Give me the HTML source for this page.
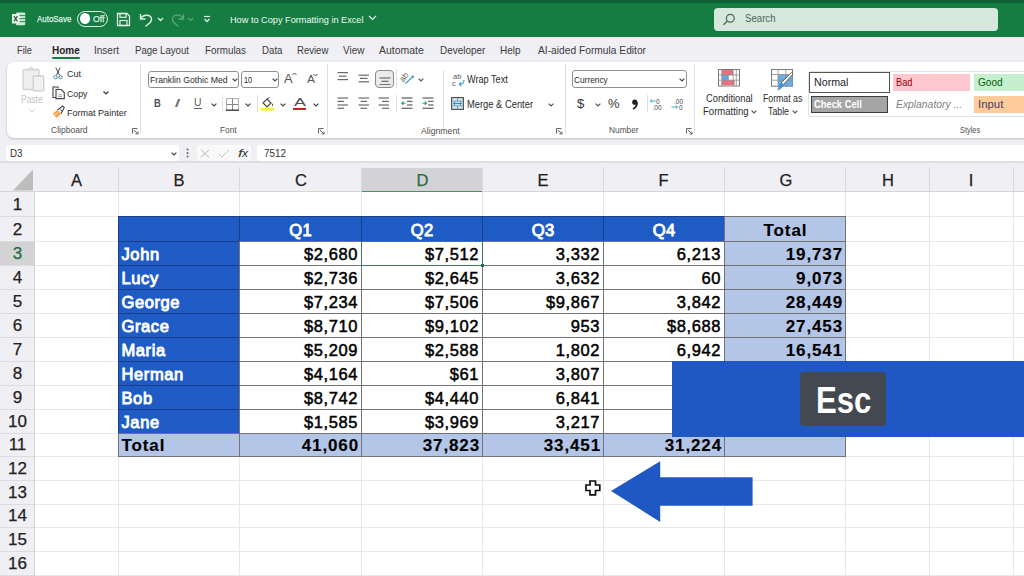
<!DOCTYPE html>
<html><head><meta charset="utf-8">
<style>
*{margin:0;padding:0;box-sizing:border-box}
html,body{width:1024px;height:576px;overflow:hidden;background:#f3f3f3;font-family:"Liberation Sans",sans-serif;position:relative}
.a{position:absolute;white-space:nowrap}
.gl{background:#e1e1e1}
.ch{top:167px;height:24px;font-size:17px;text-align:center;line-height:26px;border-right:1px solid #d8d8d8}
.rh{left:0;width:34px;font-size:17px;text-align:center;border-bottom:1px solid #d8d8d8}
.c{font-size:17px;font-weight:bold;padding:0 3px}
.t{color:#fff;font-size:10px}
.m{font-size:11px;color:#3a3a3a}
.rb{font-size:10px;color:#333}
.lbl{font-size:9px;color:#555}
.sep{width:1px;background:#dcdcdc}

</style></head><body>
<div class="a" style="left:0px;top:0px;width:1024px;height:37px;background:#157d41"></div>
<div class="a" style="left:0px;top:0px;width:1024px;height:2.5px;background:#0e5f31"></div>
<svg class="a" style="left:12px;top:12px;" width="14" height="14" viewBox="0 0 14 14"><rect x="4" y="0.5" width="9.2" height="12.8" rx="1" fill="#cdebd6"/><line x1="7" y1="3.6" x2="13.2" y2="3.6" stroke="#157d41" stroke-width="0.9"/><line x1="7" y1="6.6" x2="13.2" y2="6.6" stroke="#157d41" stroke-width="0.9"/><line x1="7" y1="9.7" x2="13.2" y2="9.7" stroke="#157d41" stroke-width="0.9"/><rect x="0" y="2" width="7.5" height="9.6" rx="0.6" fill="#e6f4ea"/><path d="M2 4.2 L5.4 9.4 M5.4 4.2 L2 9.4" stroke="#3b4f42" stroke-width="1.2"/></svg>
<div class="a" style="left:37.3px;top:14.85px;font-size:9px;line-height:9px;color:#dff0e4;transform:scaleX(0.881);transform-origin:0 0;-webkit-text-stroke:0.25px #dff0e4;">AutoSave</div>
<div class="a" style="left:77px;top:11px;width:31px;height:16px;border:1.5px solid #dff0e4;border-radius:8px"></div>
<div class="a" style="left:79.5px;top:13px;width:10.5px;height:11px;background:#fff;border-radius:50%"></div>
<div class="a" style="left:93.0px;top:14.85px;font-size:9px;line-height:9px;color:#dff0e4;transform:scaleX(0.971);transform-origin:0 0;-webkit-text-stroke:0.25px #dff0e4;">Off</div>
<svg class="a" style="left:116px;top:12px;" width="15" height="15" viewBox="0 0 15 15"><path d="M1.5 1.5 H11 L13.5 4 V13.5 H1.5 Z" fill="none" stroke="#dff0e4" stroke-width="1.3"/><rect x="4" y="1.5" width="6" height="3.8" fill="none" stroke="#dff0e4" stroke-width="1.2"/><rect x="4" y="8.5" width="7" height="5" fill="none" stroke="#dff0e4" stroke-width="1.2"/></svg>
<svg class="a" style="left:139px;top:12px;" width="15" height="15" viewBox="0 0 15 15"><path d="M2 6.5 C4 2 12 2 12.5 7 C13 10.5 9 12 6.5 14.5" fill="none" stroke="#dff0e4" stroke-width="1.4"/><path d="M1.5 2 V7 H6.5" fill="none" stroke="#dff0e4" stroke-width="1.4"/></svg>
<svg class="a" style="left:157px;top:17px;" width="7" height="5" viewBox="0 0 7 5"><path d="M1 1 L3.5 3.5 L6 1" fill="none" stroke="#dff0e4" stroke-width="1.3"/></svg>
<svg class="a" style="left:170px;top:12px;" width="15" height="15" viewBox="0 0 15 15"><path d="M13 6.5 C11 2 3 2 2.5 7 C2 10.5 6 12 8.5 14.5" fill="none" stroke="#5aa776" stroke-width="1.3"/><path d="M13.5 2 V7 H8.5" fill="none" stroke="#5aa776" stroke-width="1.3"/></svg>
<svg class="a" style="left:187px;top:17px;" width="7" height="5" viewBox="0 0 7 5"><path d="M1 1 L3.5 3.5 L6 1" fill="none" stroke="#5aa776" stroke-width="1.1"/></svg>
<svg class="a" style="left:203px;top:15px;" width="8" height="8" viewBox="0 0 8 8"><line x1="1" y1="1.5" x2="7" y2="1.5" stroke="#dff0e4" stroke-width="1.2"/><path d="M1.5 4 L4 6.5 L6.5 4" fill="none" stroke="#dff0e4" stroke-width="1.3"/></svg>
<div class="a" style="left:229.7px;top:14.73px;font-size:9.5px;line-height:9.5px;color:#f2f8f4;transform:scaleX(0.965);transform-origin:0 0;">How to Copy Formatting in Excel</div>
<svg class="a" style="left:368px;top:15px;" width="9" height="6" viewBox="0 0 9 6"><path d="M1 1 L4.5 4.5 L8 1" fill="none" stroke="#f2f8f4" stroke-width="1.2"/></svg>
<div class="a" style="left:713.5px;top:7.5px;width:284px;height:23px;background:#d6e8dc;border-radius:4px"></div>
<svg class="a" style="left:722px;top:13px;" width="14" height="13" viewBox="0 0 14 13"><circle cx="8.3" cy="5.2" r="3.9" fill="none" stroke="#476653" stroke-width="1.2"/><line x1="5.4" y1="8" x2="1.5" y2="11.8" stroke="#476653" stroke-width="1.3"/></svg>
<div class="a" style="left:745.0px;top:13.70px;font-size:10px;line-height:10px;color:#4a6653;transform:scaleX(0.963);transform-origin:0 0;">Search</div>
<div class="a" style="left:0px;top:37px;width:1024px;height:126px;background:#efeff4"></div>
<div class="a" style="left:16.6px;top:44.95px;font-size:11px;line-height:11px;color:#3b3b3b;transform:scaleX(0.846);transform-origin:0 0;">File</div>
<div class="a" style="left:52.0px;top:44.95px;font-size:11px;line-height:11px;color:#1f1f1f;font-weight:bold;transform:scaleX(0.906);transform-origin:0 0;">Home</div>
<div class="a" style="left:94.0px;top:44.95px;font-size:11px;line-height:11px;color:#3b3b3b;transform:scaleX(0.909);transform-origin:0 0;">Insert</div>
<div class="a" style="left:135.0px;top:44.95px;font-size:11px;line-height:11px;color:#3b3b3b;transform:scaleX(0.874);transform-origin:0 0;">Page Layout</div>
<div class="a" style="left:205.0px;top:44.95px;font-size:11px;line-height:11px;color:#3b3b3b;transform:scaleX(0.894);transform-origin:0 0;">Formulas</div>
<div class="a" style="left:261.5px;top:44.95px;font-size:11px;line-height:11px;color:#3b3b3b;transform:scaleX(0.882);transform-origin:0 0;">Data</div>
<div class="a" style="left:296.7px;top:44.95px;font-size:11px;line-height:11px;color:#3b3b3b;transform:scaleX(0.868);transform-origin:0 0;">Review</div>
<div class="a" style="left:342.6px;top:44.95px;font-size:11px;line-height:11px;color:#3b3b3b;transform:scaleX(0.905);transform-origin:0 0;">View</div>
<div class="a" style="left:379.0px;top:44.95px;font-size:11px;line-height:11px;color:#3b3b3b;transform:scaleX(0.949);transform-origin:0 0;">Automate</div>
<div class="a" style="left:439.6px;top:44.95px;font-size:11px;line-height:11px;color:#3b3b3b;transform:scaleX(0.905);transform-origin:0 0;">Developer</div>
<div class="a" style="left:500.4px;top:44.95px;font-size:11px;line-height:11px;color:#3b3b3b;transform:scaleX(0.910);transform-origin:0 0;">Help</div>
<div class="a" style="left:537.6px;top:44.95px;font-size:11px;line-height:11px;color:#3b3b3b;transform:scaleX(0.930);transform-origin:0 0;">AI-aided Formula Editor</div>
<div class="a" style="left:52px;top:57px;width:28px;height:2px;background:#157d41;border-radius:1px"></div>
<div class="a" style="left:6.5px;top:62px;width:1040px;height:76px;background:#fff;border-radius:7px;box-shadow:0 1px 2.5px rgba(0,0,0,.20)"></div>
<div class="a" style="left:139.5px;top:64px;width:1px;height:70px;background:#e1e1e1"></div>
<div class="a" style="left:327px;top:64px;width:1px;height:70px;background:#e1e1e1"></div>
<div class="a" style="left:565px;top:64px;width:1px;height:70px;background:#e1e1e1"></div>
<div class="a" style="left:693.5px;top:64px;width:1px;height:70px;background:#e1e1e1"></div>
<svg class="a" style="left:20px;top:66px;" width="26" height="27" viewBox="0 0 26 27"><rect x="3" y="3.5" width="16" height="20" rx="1.2" fill="#efefef" stroke="#d2d2d2" stroke-width="1.3"/><path d="M8.5 4 L11 1 L13.5 4 Z" fill="#e6e6e6" stroke="#d2d2d2" stroke-width="1.1"/><rect x="13.2" y="10" width="10.5" height="14.8" rx="0.8" fill="#f1f1f1" stroke="#cdcdcd" stroke-width="1.3"/></svg>
<div class="a" style="left:20.5px;top:95.10px;font-size:10px;line-height:10px;color:#c4c4c4;transform:scaleX(0.848);transform-origin:0 0;">Paste</div>
<svg class="a" style="left:28.5px;top:108.5px;" width="6" height="4" viewBox="0 0 6 4"><path d="M0.5 0.5 L3 3 L5.5 0.5" fill="none" stroke="#c8c8c8" stroke-width="1"/></svg>
<svg class="a" style="left:53px;top:67px;" width="10" height="13" viewBox="0 0 10 13"><path d="M2.8 0.5 L6.6 8.3 M7.2 0.5 L3.4 8.3" stroke="#4a4a4a" stroke-width="1"/><circle cx="2.6" cy="10.2" r="1.7" fill="none" stroke="#4c8da0" stroke-width="1"/><circle cx="7.4" cy="10.2" r="1.7" fill="none" stroke="#4c8da0" stroke-width="1"/></svg>
<div class="a" style="left:67.3px;top:69.12px;font-size:9.5px;line-height:9.5px;color:#2b2b2b;transform:scaleX(0.946);transform-origin:0 0;">Cut</div>
<svg class="a" style="left:51.5px;top:86px;" width="14" height="14" viewBox="0 0 14 14"><path d="M6 2.5 V1 H1 V11.5 H4" fill="none" stroke="#444" stroke-width="1.1"/><path d="M4 3.5 H9.2 L12.3 6.6 V12.6 H4 Z" fill="#fff" stroke="#444" stroke-width="1.1"/><line x1="6.3" y1="8.8" x2="10" y2="8.8" stroke="#888" stroke-width="0.8"/><line x1="6.3" y1="10.6" x2="10" y2="10.6" stroke="#888" stroke-width="0.8"/></svg>
<div class="a" style="left:67.3px;top:89.12px;font-size:9.5px;line-height:9.5px;color:#2b2b2b;transform:scaleX(0.924);transform-origin:0 0;">Copy</div>
<svg class="a" style="left:102.5px;top:91px;" width="6" height="4" viewBox="0 0 6 4"><path d="M0.5 0.5 L3 3 L5.5 0.5" fill="none" stroke="#333" stroke-width="1.1"/></svg>
<svg class="a" style="left:52px;top:105px;" width="13" height="14" viewBox="0 0 13 14"><path d="M0.8 8.5 L5.5 5 L9 8.8 L4.5 13 Z" fill="#f3a04a"/><path d="M1.5 11 L6 7.5" stroke="#fff" stroke-width="0.7"/><path d="M5.5 5 L10.8 1 L12.3 2.6 L9 8.8" fill="none" stroke="#4a4a4a" stroke-width="1.1"/><path d="M8 4.5 L10.5 6" stroke="#4a4a4a" stroke-width="0.9"/></svg>
<div class="a" style="left:67.3px;top:108.42px;font-size:9.5px;line-height:9.5px;color:#2b2b2b;transform:scaleX(0.950);transform-origin:0 0;">Format Painter</div>
<div class="a" style="left:50.5px;top:126.15px;font-size:9px;line-height:9px;color:#505050;transform:scaleX(0.947);transform-origin:0 0;">Clipboard</div>
<svg class="a" style="left:131.5px;top:127.5px;" width="7" height="7" viewBox="0 0 7 7"><path d="M0.5 0.5 H5.5 M0.5 0.5 V5.5" stroke="#666" stroke-width="1"/><path d="M2 2 L6 6 M6 3.5 V6 H3.5" fill="none" stroke="#666" stroke-width="1"/></svg>
<svg class="a" style="left:318px;top:127.5px;" width="7" height="7" viewBox="0 0 7 7"><path d="M0.5 0.5 H5.5 M0.5 0.5 V5.5" stroke="#666" stroke-width="1"/><path d="M2 2 L6 6 M6 3.5 V6 H3.5" fill="none" stroke="#666" stroke-width="1"/></svg>
<svg class="a" style="left:556px;top:127.5px;" width="7" height="7" viewBox="0 0 7 7"><path d="M0.5 0.5 H5.5 M0.5 0.5 V5.5" stroke="#666" stroke-width="1"/><path d="M2 2 L6 6 M6 3.5 V6 H3.5" fill="none" stroke="#666" stroke-width="1"/></svg>
<svg class="a" style="left:685.5px;top:127.5px;" width="7" height="7" viewBox="0 0 7 7"><path d="M0.5 0.5 H5.5 M0.5 0.5 V5.5" stroke="#666" stroke-width="1"/><path d="M2 2 L6 6 M6 3.5 V6 H3.5" fill="none" stroke="#666" stroke-width="1"/></svg>
<div class="a" style="left:147.7px;top:70.7px;width:91px;height:17.6px;border:1px solid #8f8f8f;border-radius:3px;background:#fff"></div>
<div class="a" style="left:150.2px;top:75.22px;font-size:9.5px;line-height:9.5px;color:#2b2b2b;transform:scaleX(0.913);transform-origin:0 0;">Franklin Gothic Med</div>
<svg class="a" style="left:231.5px;top:78px;" width="6" height="4" viewBox="0 0 6 4"><path d="M0.6 0.6 L3 3 L5.4 0.6" fill="none" stroke="#444" stroke-width="1.2"/></svg>
<div class="a" style="left:241.4px;top:70.7px;width:37.6px;height:17.6px;border:1px solid #8f8f8f;border-radius:3px;background:#fff"></div>
<div class="a" style="left:243.8px;top:75.22px;font-size:9.5px;line-height:9.5px;color:#2b2b2b;transform:scaleX(0.775);transform-origin:0 0;">10</div>
<svg class="a" style="left:271.5px;top:78px;" width="6" height="4" viewBox="0 0 6 4"><path d="M0.6 0.6 L3 3 L5.4 0.6" fill="none" stroke="#444" stroke-width="1.2"/></svg>
<div class="a" style="left:284.4px;top:72.35px;font-size:13px;line-height:13px;color:#555;transform:scaleX(0.992);transform-origin:0 0;">A</div>
<svg class="a" style="left:292px;top:72px;" width="5" height="4" viewBox="0 0 5 4"><path d="M0.5 3 L2.5 1 L4.5 3" fill="none" stroke="#333" stroke-width="0.9"/></svg>
<div class="a" style="left:307.0px;top:73.62px;font-size:11.5px;line-height:11.5px;color:#555;transform:scaleX(1.043);transform-origin:0 0;">A</div>
<svg class="a" style="left:313px;top:73px;" width="5" height="4" viewBox="0 0 5 4"><path d="M0.5 1 L2.5 3 L4.5 1" fill="none" stroke="#333" stroke-width="0.9"/></svg>
<div class="a" style="left:153.5px;top:98.38px;font-size:10.5px;line-height:10.5px;color:#505050;font-weight:bold;transform:scaleX(0.895);transform-origin:0 0;">B</div>
<div class="a" style="left:174.0px;top:97.72px;font-size:11.5px;line-height:11.5px;color:#707070;font-style:italic;transform:scaleX(2.029);transform-origin:0 0;font-family:"Liberation Serif";">I</div>
<div class="a" style="left:194.0px;top:97.08px;font-size:10.5px;line-height:10.5px;color:#606060;transform:scaleX(0.988);transform-origin:0 0;">U</div>
<div class="a" style="left:193.6px;top:107.8px;width:8px;height:1px;background:#606060"></div>
<svg class="a" style="left:211px;top:102.5px;" width="6" height="4" viewBox="0 0 6 4"><path d="M0.6 0.6 L3 3 L5.4 0.6" fill="none" stroke="#444" stroke-width="1.2"/></svg>
<div class="a" style="left:222px;top:95px;width:1px;height:17px;background:#e1e1e1"></div>
<svg class="a" style="left:226px;top:98px;" width="13" height="13" viewBox="0 0 13 13"><rect x="0.6" y="0.6" width="11.8" height="11.8" fill="none" stroke="#aaa" stroke-width="1"/><line x1="6.5" y1="0.6" x2="6.5" y2="12" stroke="#888" stroke-width="1"/><line x1="0.6" y1="6.5" x2="12.4" y2="6.5" stroke="#888" stroke-width="1"/><line x1="0" y1="12.2" x2="13" y2="12.2" stroke="#444" stroke-width="1.4"/></svg>
<svg class="a" style="left:245px;top:102.5px;" width="6" height="4" viewBox="0 0 6 4"><path d="M0.6 0.6 L3 3 L5.4 0.6" fill="none" stroke="#444" stroke-width="1.2"/></svg>
<div class="a" style="left:256.5px;top:95px;width:1px;height:17px;background:#e1e1e1"></div>
<svg class="a" style="left:261px;top:97px;" width="14" height="14" viewBox="0 0 14 14"><path d="M2 6 L6 2 L10 6 L6 10 Z" fill="none" stroke="#444" stroke-width="1.1"/><path d="M6 2 L8.5 0.5" stroke="#444" stroke-width="1"/><path d="M11 6.5 Q12.5 8.5 11 9" fill="#444" stroke="#444" stroke-width="0.8"/><rect x="0" y="11" width="13" height="2.6" fill="#f0ef3a"/></svg>
<svg class="a" style="left:280px;top:102.5px;" width="6" height="4" viewBox="0 0 6 4"><path d="M0.6 0.6 L3 3 L5.4 0.6" fill="none" stroke="#444" stroke-width="1.2"/></svg>
<div class="a" style="left:293.5px;top:96.52px;font-size:11.5px;line-height:11.5px;color:#505050;transform:scaleX(1.564);transform-origin:0 0;">A</div>
<div class="a" style="left:293px;top:107.8px;width:13px;height:2.3px;background:#d0201e"></div>
<svg class="a" style="left:312.5px;top:102.5px;" width="6" height="4" viewBox="0 0 6 4"><path d="M0.6 0.6 L3 3 L5.4 0.6" fill="none" stroke="#444" stroke-width="1.2"/></svg>
<div class="a" style="left:220.0px;top:126.35px;font-size:9px;line-height:9px;color:#505050;transform:scaleX(0.921);transform-origin:0 0;">Font</div>
<svg class="a" style="left:337px;top:71px;" width="14" height="14" viewBox="0 0 14 14"><line x1="0.5" y1="1.6" x2="11" y2="1.6" stroke="#6a6a6a" stroke-width="1.2"/><line x1="2" y1="5.2" x2="9.5" y2="5.2" stroke="#6a6a6a" stroke-width="1.2"/><line x1="0.5" y1="8.6" x2="11" y2="8.6" stroke="#6a6a6a" stroke-width="1.2"/></svg>
<svg class="a" style="left:357.5px;top:71px;" width="14" height="14" viewBox="0 0 14 14"><line x1="0.5" y1="4.2" x2="11" y2="4.2" stroke="#6a6a6a" stroke-width="1.2"/><line x1="2" y1="7.4" x2="9.5" y2="7.4" stroke="#6a6a6a" stroke-width="1.2"/><line x1="0.5" y1="10.8" x2="11" y2="10.8" stroke="#6a6a6a" stroke-width="1.2"/></svg>
<div class="a" style="left:375.3px;top:70px;width:19px;height:18.3px;border:1px solid #8a8a8a;border-radius:4px;background:#ebebeb"></div>
<svg class="a" style="left:378.5px;top:71px;" width="14" height="14" viewBox="0 0 14 14"><line x1="0.5" y1="7" x2="11.5" y2="7" stroke="#6a6a6a" stroke-width="1.2"/><line x1="2.5" y1="10.3" x2="9.5" y2="10.3" stroke="#6a6a6a" stroke-width="1.2"/><line x1="0.5" y1="13.7" x2="11.5" y2="13.7" stroke="#6a6a6a" stroke-width="1.2"/></svg>
<div class="a" style="left:396.4px;top:69px;width:1px;height:19px;background:#e1e1e1"></div>
<svg class="a" style="left:399px;top:70px;" width="18" height="16" viewBox="0 0 18 16"><text x="0" y="0" font-family="Liberation Sans" font-size="8.5" fill="#5a5a5a" transform="translate(4.5 12.5) rotate(-55)">ab</text><line x1="6.5" y1="13.5" x2="13.5" y2="7" stroke="#3aa3c4" stroke-width="1.2"/><circle cx="13.8" cy="6.7" r="1.3" fill="#3aa3c4"/></svg>
<svg class="a" style="left:418px;top:78px;" width="6" height="4" viewBox="0 0 6 4"><path d="M0.6 0.6 L3 3 L5.4 0.6" fill="none" stroke="#555" stroke-width="1.2"/></svg>
<svg class="a" style="left:337px;top:96px;" width="14" height="14" viewBox="0 0 14 14"><line x1="0.5" y1="2" x2="11" y2="2" stroke="#6a6a6a" stroke-width="1.2"/><line x1="0.5" y1="5.4" x2="7" y2="5.4" stroke="#6a6a6a" stroke-width="1.2"/><line x1="0.5" y1="9" x2="11" y2="9" stroke="#6a6a6a" stroke-width="1.2"/><line x1="0.5" y1="12.3" x2="7" y2="12.3" stroke="#6a6a6a" stroke-width="1.2"/></svg>
<svg class="a" style="left:357.5px;top:96px;" width="14" height="14" viewBox="0 0 14 14"><line x1="0.5" y1="2" x2="11" y2="2" stroke="#6a6a6a" stroke-width="1.2"/><line x1="2.5" y1="5.4" x2="9" y2="5.4" stroke="#6a6a6a" stroke-width="1.2"/><line x1="0.5" y1="9" x2="11" y2="9" stroke="#6a6a6a" stroke-width="1.2"/><line x1="2.5" y1="12.3" x2="9" y2="12.3" stroke="#6a6a6a" stroke-width="1.2"/></svg>
<svg class="a" style="left:378px;top:96px;" width="14" height="14" viewBox="0 0 14 14"><line x1="0.5" y1="2" x2="11" y2="2" stroke="#6a6a6a" stroke-width="1.2"/><line x1="4" y1="5.4" x2="11" y2="5.4" stroke="#6a6a6a" stroke-width="1.2"/><line x1="0.5" y1="9" x2="11" y2="9" stroke="#6a6a6a" stroke-width="1.2"/><line x1="4" y1="12.3" x2="11" y2="12.3" stroke="#6a6a6a" stroke-width="1.2"/></svg>
<div class="a" style="left:396.4px;top:95px;width:1px;height:17px;background:#e1e1e1"></div>
<svg class="a" style="left:401px;top:96px;" width="14" height="14" viewBox="0 0 14 14"><line x1="0.5" y1="2" x2="11.5" y2="2" stroke="#6a6a6a" stroke-width="1.3"/><line x1="6" y1="5.4" x2="11.5" y2="5.4" stroke="#6a6a6a" stroke-width="1.3"/><line x1="6" y1="9" x2="11.5" y2="9" stroke="#6a6a6a" stroke-width="1.3"/><line x1="0.5" y1="12.3" x2="11.5" y2="12.3" stroke="#6a6a6a" stroke-width="1.3"/><path d="M4.5 7.2 H0.8 M2.5 5.5 L0.8 7.2 L2.5 8.9" fill="none" stroke="#2a9f70" stroke-width="1.1"/></svg>
<svg class="a" style="left:422px;top:96px;" width="14" height="14" viewBox="0 0 14 14"><line x1="0.5" y1="2" x2="11.5" y2="2" stroke="#6a6a6a" stroke-width="1.3"/><line x1="6" y1="5.4" x2="11.5" y2="5.4" stroke="#6a6a6a" stroke-width="1.3"/><line x1="6" y1="9" x2="11.5" y2="9" stroke="#6a6a6a" stroke-width="1.3"/><line x1="0.5" y1="12.3" x2="11.5" y2="12.3" stroke="#6a6a6a" stroke-width="1.3"/><path d="M0.5 7.2 H4.5 M2.8 5.5 L4.5 7.2 L2.8 8.9" fill="none" stroke="#2a9f70" stroke-width="1.1"/></svg>
<div class="a" style="left:443px;top:70px;width:1px;height:60px;background:#e1e1e1"></div>
<svg class="a" style="left:451.5px;top:72.5px;" width="14" height="14" viewBox="0 0 14 14"><text x="1" y="6.3" font-family="Liberation Sans" font-size="7.5" fill="#5a5a5a">ab</text><text x="0" y="13" font-family="Liberation Sans" font-size="7.5" fill="#5a5a5a">c</text><path d="M11.8 7 Q12.5 11.2 7.3 11.2 M9.2 9.4 L7.3 11.2 L9.2 13" fill="none" stroke="#3aa3c4" stroke-width="1.1"/></svg>
<div class="a" style="left:467.0px;top:75.00px;font-size:10px;line-height:10px;color:#2b2b2b;transform:scaleX(0.914);transform-origin:0 0;">Wrap Text</div>
<svg class="a" style="left:451px;top:97px;" width="13" height="13" viewBox="0 0 13 13"><rect x="0.6" y="0.6" width="11.8" height="11.8" fill="#cfe6f3" stroke="#4a4a4a" stroke-width="1.1"/><line x1="0.6" y1="4.2" x2="12.4" y2="4.2" stroke="#6a8a9a" stroke-width="0.8"/><line x1="0.6" y1="8.8" x2="12.4" y2="8.8" stroke="#6a8a9a" stroke-width="0.8"/><line x1="6.5" y1="0.6" x2="6.5" y2="4.2" stroke="#6a8a9a" stroke-width="0.8"/><line x1="6.5" y1="8.8" x2="6.5" y2="12.4" stroke="#6a8a9a" stroke-width="0.8"/><path d="M2.5 6.5 H10.5 M4 5.1 L2.5 6.5 L4 7.9 M9 5.1 L10.5 6.5 L9 7.9" fill="none" stroke="#2a8fb8" stroke-width="1"/></svg>
<div class="a" style="left:467.0px;top:99.80px;font-size:10px;line-height:10px;color:#2b2b2b;transform:scaleX(0.935);transform-origin:0 0;">Merge &amp; Center</div>
<svg class="a" style="left:547.5px;top:102.5px;" width="6" height="4" viewBox="0 0 6 4"><path d="M0.6 0.6 L3 3 L5.4 0.6" fill="none" stroke="#555" stroke-width="1.2"/></svg>
<div class="a" style="left:421.0px;top:126.95px;font-size:9px;line-height:9px;color:#505050;transform:scaleX(0.967);transform-origin:0 0;">Alignment</div>
<div class="a" style="left:572.4px;top:70.4px;width:115px;height:17.6px;border:1px solid #8f8f8f;border-radius:3px;background:#fff"></div>
<div class="a" style="left:574.3px;top:75.12px;font-size:9.5px;line-height:9.5px;color:#2b2b2b;transform:scaleX(0.874);transform-origin:0 0;">Currency</div>
<svg class="a" style="left:679px;top:78px;" width="6" height="4" viewBox="0 0 6 4"><path d="M0.6 0.6 L3 3 L5.4 0.6" fill="none" stroke="#444" stroke-width="1.2"/></svg>
<div class="a" style="left:577.2px;top:96.95px;font-size:13px;line-height:13px;color:#333;transform:scaleX(1.009);transform-origin:0 0;">$</div>
<svg class="a" style="left:594.5px;top:103px;" width="6" height="4" viewBox="0 0 6 4"><path d="M0.6 0.6 L3 3 L5.4 0.6" fill="none" stroke="#555" stroke-width="1.2"/></svg>
<div class="a" style="left:608.0px;top:96.95px;font-size:13px;line-height:13px;color:#333;transform:scaleX(0.995);transform-origin:0 0;">%</div>
<svg class="a" style="left:631px;top:99px;" width="8" height="11" viewBox="0 0 8 11"><circle cx="3.8" cy="3.2" r="2.6" fill="#222"/><path d="M6 3.5 Q6 8 2 10" fill="none" stroke="#222" stroke-width="1.8"/></svg>
<div class="a" style="left:646.7px;top:95px;width:1px;height:17px;background:#e1e1e1"></div>
<svg class="a" style="left:650px;top:98px;" width="14" height="12" viewBox="0 0 14 12"><text x="6" y="5.5" font-family="Liberation Sans" font-size="6.5" fill="#444">0</text><text x="2.5" y="11.5" font-family="Liberation Sans" font-size="6.5" fill="#444">.00</text><path d="M0.5 3 H5.5 M2.3 1.3 L0.5 3 L2.3 4.7" fill="none" stroke="#2a9fc0" stroke-width="0.9"/></svg>
<svg class="a" style="left:671px;top:98px;" width="14" height="12" viewBox="0 0 14 12"><text x="3" y="5.5" font-family="Liberation Sans" font-size="6.5" fill="#444">.00</text><text x="8" y="11.5" font-family="Liberation Sans" font-size="6.5" fill="#444">0</text><path d="M0.5 9 H6.5 M4.7 7.3 L6.5 9 L4.7 10.7" fill="none" stroke="#2a9fc0" stroke-width="0.9"/></svg>
<div class="a" style="left:608.8px;top:126.35px;font-size:9px;line-height:9px;color:#505050;transform:scaleX(0.925);transform-origin:0 0;">Number</div>
<svg class="a" style="left:718.3px;top:69.4px;" width="22" height="18" viewBox="0 0 22 18"><rect x="0.5" y="0.5" width="21" height="16.5" fill="#fff" stroke="#7a7a7a" stroke-width="1"/><rect x="3.8" y="1" width="11.2" height="5" fill="#ea6f80"/><rect x="3.8" y="6" width="7" height="5.2" fill="#6aa6dc"/><rect x="3.8" y="11.2" width="12.8" height="5" fill="#ea6f80"/><line x1="3.8" y1="0.5" x2="3.8" y2="17" stroke="#8a8a8a" stroke-width="0.8"/><line x1="15.2" y1="0.5" x2="15.2" y2="17" stroke="#8a8a8a" stroke-width="0.8"/><line x1="18.3" y1="0.5" x2="18.3" y2="17" stroke="#8a8a8a" stroke-width="0.8"/><line x1="0.5" y1="6" x2="21.5" y2="6" stroke="#8a8a8a" stroke-width="0.8"/><line x1="0.5" y1="11.2" x2="21.5" y2="11.2" stroke="#8a8a8a" stroke-width="0.8"/></svg>
<div class="a" style="left:706.0px;top:93.90px;font-size:10px;line-height:10px;color:#2b2b2b;transform:scaleX(0.933);transform-origin:0 0;">Conditional</div>
<div class="a" style="left:703.4px;top:107.10px;font-size:10px;line-height:10px;color:#2b2b2b;transform:scaleX(0.954);transform-origin:0 0;">Formatting</div>
<svg class="a" style="left:751px;top:110px;" width="6" height="4" viewBox="0 0 6 4"><path d="M0.6 0.6 L3 3 L5.4 0.6" fill="none" stroke="#555" stroke-width="1.2"/></svg>
<svg class="a" style="left:771px;top:69.4px;" width="24" height="22" viewBox="0 0 24 22"><rect x="0.5" y="0.5" width="21" height="16.7" fill="#fff" stroke="#7a7a7a" stroke-width="1"/><rect x="7" y="5.5" width="14.5" height="11.7" fill="#6aaee8"/><line x1="7" y1="0.5" x2="7" y2="17.2" stroke="#8a8a8a" stroke-width="0.8"/><line x1="14.8" y1="0.5" x2="14.8" y2="17.2" stroke="#8a8a8a" stroke-width="0.8"/><line x1="0.5" y1="5.5" x2="21.5" y2="5.5" stroke="#8a8a8a" stroke-width="0.8"/><line x1="0.5" y1="11.2" x2="21.5" y2="11.2" stroke="#8a8a8a" stroke-width="0.8"/><path d="M22 5 L12.5 15.5 L10 14 L20.5 3.5 Z" fill="#fff" stroke="#5a5a5a" stroke-width="0.9"/><path d="M12.5 15.5 Q11 20 6.5 21.5 Q7.5 16.5 10 14 Z" fill="#3d8ee0"/></svg>
<div class="a" style="left:762.9px;top:93.90px;font-size:10px;line-height:10px;color:#2b2b2b;transform:scaleX(0.873);transform-origin:0 0;">Format as</div>
<div class="a" style="left:768.0px;top:107.10px;font-size:10px;line-height:10px;color:#2b2b2b;transform:scaleX(0.878);transform-origin:0 0;">Table</div>
<svg class="a" style="left:792px;top:110px;" width="6" height="4" viewBox="0 0 6 4"><path d="M0.6 0.6 L3 3 L5.4 0.6" fill="none" stroke="#555" stroke-width="1.2"/></svg>
<div class="a" style="left:807.7px;top:71px;width:240px;height:45.6px;border:1px solid #e2e2e2;border-radius:3px;background:#fff"></div>
<div class="a" style="left:808.8px;top:72.2px;width:81.2px;height:20.8px;border:1.5px solid #555;background:#fff"></div>
<div class="a" style="left:814.2px;top:77.15px;font-size:11px;line-height:11px;color:#1e1e1e;transform:scaleX(0.970);transform-origin:0 0;">Normal</div>
<div class="a" style="left:893px;top:74.4px;width:76.6px;height:16.4px;background:#ffc7ce"></div>
<div class="a" style="left:896.3px;top:77.15px;font-size:11px;line-height:11px;color:#9c0006;transform:scaleX(0.838);transform-origin:0 0;">Bad</div>
<div class="a" style="left:974.4px;top:74.4px;width:60px;height:16.4px;background:#c6efce"></div>
<div class="a" style="left:977.7px;top:77.15px;font-size:11px;line-height:11px;color:#006100;transform:scaleX(0.917);transform-origin:0 0;">Good</div>
<div class="a" style="left:810.5px;top:95.6px;width:77.7px;height:17.1px;border:1.5px solid #3f3f3f;background:#a5a5a5"></div>
<div class="a" style="left:814.2px;top:99.08px;font-size:10.5px;line-height:10.5px;color:#fff;font-weight:bold;transform:scaleX(0.890);transform-origin:0 0;">Check Cell</div>
<div class="a" style="left:896.3px;top:99.08px;font-size:10.5px;line-height:10.5px;color:#7f7f7f;font-style:italic;transform:scaleX(0.985);transform-origin:0 0;">Explanatory ...</div>
<div class="a" style="left:974.4px;top:95.6px;width:60px;height:17.1px;background:#ffcc99"></div>
<div class="a" style="left:977.7px;top:98.65px;font-size:11px;line-height:11px;color:#3f3f76;transform:scaleX(1.034);transform-origin:0 0;">Input</div>
<div class="a" style="left:959.7px;top:126.35px;font-size:9px;line-height:9px;color:#505050;transform:scaleX(0.824);transform-origin:0 0;">Styles</div>
<div class="a" style="left:6.4px;top:145.4px;width:173px;height:15.6px;background:#fff;border-radius:3px"></div>
<div class="a" style="left:9.5px;top:148.27px;font-size:10.5px;line-height:10.5px;color:#333;transform:scaleX(0.930);transform-origin:0 0;">D3</div>
<svg class="a" style="left:171px;top:151.5px;" width="6" height="4" viewBox="0 0 6 4"><path d="M0.6 0.6 L3 3 L5.4 0.6" fill="none" stroke="#444" stroke-width="1.2"/></svg>
<svg class="a" style="left:186px;top:148px;" width="3" height="10" viewBox="0 0 3 10"><circle cx="1.5" cy="1.5" r="1" fill="#666"/><circle cx="1.5" cy="5" r="1" fill="#666"/><circle cx="1.5" cy="8.5" r="1" fill="#666"/></svg>
<div class="a" style="left:196.8px;top:145.4px;width:54px;height:15.6px;background:#f9f9fa;border-radius:3px"></div>
<svg class="a" style="left:199.5px;top:148.5px;" width="10" height="9" viewBox="0 0 10 9"><path d="M0.8 0.8 L9 8.2 M9 0.8 L0.8 8.2" stroke="#b8b8b8" stroke-width="1"/></svg>
<svg class="a" style="left:218px;top:148.5px;" width="12" height="9" viewBox="0 0 12 9"><path d="M0.8 5 L4 8 L11 0.8" fill="none" stroke="#c2c2c2" stroke-width="1"/></svg>
<div class="a" style="left:237.5px;top:147.65px;font-size:11px;line-height:11px;color:#333;font-style:italic;transform:scaleX(1.469);transform-origin:0 0;font-family:"Liberation Serif";">f</div>
<div class="a" style="left:242.0px;top:148.50px;font-size:10px;line-height:10px;color:#333;font-style:italic;transform:scaleX(1.200);transform-origin:0 0;font-family:"Liberation Serif";">x</div>
<div class="a" style="left:256.9px;top:145.4px;width:790px;height:15.6px;background:#fff;border-radius:3px"></div>
<div class="a" style="left:264.0px;top:148.50px;font-size:10px;line-height:10px;color:#333;transform:scaleX(0.989);transform-origin:0 0;">7512</div>
<div class="a" style="left:0px;top:161px;width:1024px;height:1.5px;background:#dedede"></div>
<div class="a" style="left:0px;top:162.5px;width:1024px;height:413.5px;background:#fff"></div>
<div class="a" style="left:118px;top:191px;width:1px;height:385px;background:#e8e8e8"></div>
<div class="a" style="left:239px;top:191px;width:1px;height:385px;background:#e8e8e8"></div>
<div class="a" style="left:361px;top:191px;width:1px;height:385px;background:#e8e8e8"></div>
<div class="a" style="left:482px;top:191px;width:1px;height:385px;background:#e8e8e8"></div>
<div class="a" style="left:603px;top:191px;width:1px;height:385px;background:#e8e8e8"></div>
<div class="a" style="left:724px;top:191px;width:1px;height:385px;background:#e8e8e8"></div>
<div class="a" style="left:845px;top:191px;width:1px;height:385px;background:#e8e8e8"></div>
<div class="a" style="left:929px;top:191px;width:1px;height:385px;background:#e8e8e8"></div>
<div class="a" style="left:1013px;top:191px;width:1px;height:385px;background:#e8e8e8"></div>
<div class="a" style="left:1100px;top:191px;width:1px;height:385px;background:#e8e8e8"></div>
<div class="a" style="left:34px;top:216px;width:1000px;height:1px;background:#e8e8e8"></div>
<div class="a" style="left:34px;top:241px;width:1000px;height:1px;background:#e8e8e8"></div>
<div class="a" style="left:34px;top:265px;width:1000px;height:1px;background:#e8e8e8"></div>
<div class="a" style="left:34px;top:289px;width:1000px;height:1px;background:#e8e8e8"></div>
<div class="a" style="left:34px;top:313px;width:1000px;height:1px;background:#e8e8e8"></div>
<div class="a" style="left:34px;top:337px;width:1000px;height:1px;background:#e8e8e8"></div>
<div class="a" style="left:34px;top:361px;width:1000px;height:1px;background:#e8e8e8"></div>
<div class="a" style="left:34px;top:385px;width:1000px;height:1px;background:#e8e8e8"></div>
<div class="a" style="left:34px;top:409px;width:1000px;height:1px;background:#e8e8e8"></div>
<div class="a" style="left:34px;top:433px;width:1000px;height:1px;background:#e8e8e8"></div>
<div class="a" style="left:34px;top:456px;width:1000px;height:1px;background:#e8e8e8"></div>
<div class="a" style="left:34px;top:480px;width:1000px;height:1px;background:#e8e8e8"></div>
<div class="a" style="left:34px;top:504px;width:1000px;height:1px;background:#e8e8e8"></div>
<div class="a" style="left:34px;top:527px;width:1000px;height:1px;background:#e8e8e8"></div>
<div class="a" style="left:34px;top:551px;width:1000px;height:1px;background:#e8e8e8"></div>
<div class="a" style="left:34px;top:575px;width:1000px;height:1px;background:#e8e8e8"></div>
<div class="a" style="left:34px;top:600px;width:1000px;height:1px;background:#e8e8e8"></div>
<div class="a" style="left:0px;top:162.5px;width:1024px;height:28.5px;background:#f0eff3"></div>
<div class="a" style="left:0px;top:191px;width:1024px;height:1px;background:#d6d6d6"></div>
<div class="a" style="left:118px;top:166.5px;width:1px;height:24.5px;background:#dadada"></div>
<div class="a" style="left:71.0px;top:172.28px;font-size:16.5px;line-height:16.5px;color:#222;width:10px;text-align:center;-webkit-text-stroke:0.25px #222;">A</div>
<div class="a" style="left:239px;top:166.5px;width:1px;height:24.5px;background:#dadada"></div>
<div class="a" style="left:173.5px;top:172.28px;font-size:16.5px;line-height:16.5px;color:#222;width:10px;text-align:center;-webkit-text-stroke:0.25px #222;">B</div>
<div class="a" style="left:361px;top:166.5px;width:1px;height:24.5px;background:#dadada"></div>
<div class="a" style="left:295.0px;top:172.28px;font-size:16.5px;line-height:16.5px;color:#222;width:10px;text-align:center;-webkit-text-stroke:0.25px #222;">C</div>
<div class="a" style="left:482px;top:166.5px;width:1px;height:24.5px;background:#dadada"></div>
<div class="a" style="left:362px;top:167.5px;width:120px;height:23.5px;background:#d3d2d5"></div>
<div class="a" style="left:362px;top:190.5px;width:120px;height:1px;background:#4f8f6c"></div>
<div class="a" style="left:416.5px;top:172.28px;font-size:16.5px;line-height:16.5px;color:#2a6a48;width:10px;text-align:center;-webkit-text-stroke:0.25px #2a6a48;">D</div>
<div class="a" style="left:603px;top:166.5px;width:1px;height:24.5px;background:#dadada"></div>
<div class="a" style="left:537.5px;top:172.28px;font-size:16.5px;line-height:16.5px;color:#222;width:10px;text-align:center;-webkit-text-stroke:0.25px #222;">E</div>
<div class="a" style="left:724px;top:166.5px;width:1px;height:24.5px;background:#dadada"></div>
<div class="a" style="left:658.5px;top:172.28px;font-size:16.5px;line-height:16.5px;color:#222;width:10px;text-align:center;-webkit-text-stroke:0.25px #222;">F</div>
<div class="a" style="left:845px;top:166.5px;width:1px;height:24.5px;background:#dadada"></div>
<div class="a" style="left:779.5px;top:172.28px;font-size:16.5px;line-height:16.5px;color:#222;width:10px;text-align:center;-webkit-text-stroke:0.25px #222;">G</div>
<div class="a" style="left:929px;top:166.5px;width:1px;height:24.5px;background:#dadada"></div>
<div class="a" style="left:882.0px;top:172.28px;font-size:16.5px;line-height:16.5px;color:#222;width:10px;text-align:center;-webkit-text-stroke:0.25px #222;">H</div>
<div class="a" style="left:1013px;top:166.5px;width:1px;height:24.5px;background:#dadada"></div>
<div class="a" style="left:966.0px;top:172.28px;font-size:16.5px;line-height:16.5px;color:#222;width:10px;text-align:center;-webkit-text-stroke:0.25px #222;">I</div>
<div class="a" style="left:1100px;top:166.5px;width:1px;height:24.5px;background:#dadada"></div>
<div class="a" style="left:1051.5px;top:172.28px;font-size:16.5px;line-height:16.5px;color:#222;width:10px;text-align:center;-webkit-text-stroke:0.25px #222;">J</div>
<svg class="a" style="left:0px;top:162.5px;" width="34" height="28.5" viewBox="0 0 34 28.5"><polygon points="13,27.5 33,27.5 33,6.5" fill="#bdbdbd"/></svg>
<div class="a" style="left:0px;top:192px;width:34px;height:385px;background:#f0eff3"></div>
<div class="a" style="left:34px;top:191px;width:1px;height:385px;background:#d4d4d4"></div>
<div class="a" style="left:0px;top:216px;width:34px;height:1px;background:#dcdcdc"></div>
<div class="a" style="left:0.5px;top:196.35px;font-size:17px;line-height:17px;color:#222;width:34px;text-align:center;-webkit-text-stroke:0.25px #222;">1</div>
<div class="a" style="left:0px;top:241px;width:34px;height:1px;background:#dcdcdc"></div>
<div class="a" style="left:0.5px;top:221.35px;font-size:17px;line-height:17px;color:#222;width:34px;text-align:center;-webkit-text-stroke:0.25px #222;">2</div>
<div class="a" style="left:0px;top:265px;width:34px;height:1px;background:#dcdcdc"></div>
<div class="a" style="left:0px;top:242px;width:34px;height:23px;background:#d3d2d5"></div>
<div class="a" style="left:0.5px;top:245.35px;font-size:17px;line-height:17px;color:#1e6b3e;width:34px;text-align:center;-webkit-text-stroke:0.25px #1e6b3e;">3</div>
<div class="a" style="left:0px;top:289px;width:34px;height:1px;background:#dcdcdc"></div>
<div class="a" style="left:0.5px;top:269.35px;font-size:17px;line-height:17px;color:#222;width:34px;text-align:center;-webkit-text-stroke:0.25px #222;">4</div>
<div class="a" style="left:0px;top:313px;width:34px;height:1px;background:#dcdcdc"></div>
<div class="a" style="left:0.5px;top:293.35px;font-size:17px;line-height:17px;color:#222;width:34px;text-align:center;-webkit-text-stroke:0.25px #222;">5</div>
<div class="a" style="left:0px;top:337px;width:34px;height:1px;background:#dcdcdc"></div>
<div class="a" style="left:0.5px;top:317.35px;font-size:17px;line-height:17px;color:#222;width:34px;text-align:center;-webkit-text-stroke:0.25px #222;">6</div>
<div class="a" style="left:0px;top:361px;width:34px;height:1px;background:#dcdcdc"></div>
<div class="a" style="left:0.5px;top:341.35px;font-size:17px;line-height:17px;color:#222;width:34px;text-align:center;-webkit-text-stroke:0.25px #222;">7</div>
<div class="a" style="left:0px;top:385px;width:34px;height:1px;background:#dcdcdc"></div>
<div class="a" style="left:0.5px;top:365.35px;font-size:17px;line-height:17px;color:#222;width:34px;text-align:center;-webkit-text-stroke:0.25px #222;">8</div>
<div class="a" style="left:0px;top:409px;width:34px;height:1px;background:#dcdcdc"></div>
<div class="a" style="left:0.5px;top:389.35px;font-size:17px;line-height:17px;color:#222;width:34px;text-align:center;-webkit-text-stroke:0.25px #222;">9</div>
<div class="a" style="left:0px;top:433px;width:34px;height:1px;background:#dcdcdc"></div>
<div class="a" style="left:0.5px;top:413.35px;font-size:17px;line-height:17px;color:#222;width:34px;text-align:center;-webkit-text-stroke:0.25px #222;">10</div>
<div class="a" style="left:0px;top:456px;width:34px;height:1px;background:#dcdcdc"></div>
<div class="a" style="left:0.5px;top:436.35px;font-size:17px;line-height:17px;color:#222;width:34px;text-align:center;-webkit-text-stroke:0.25px #222;">11</div>
<div class="a" style="left:0px;top:480px;width:34px;height:1px;background:#dcdcdc"></div>
<div class="a" style="left:0.5px;top:460.35px;font-size:17px;line-height:17px;color:#222;width:34px;text-align:center;-webkit-text-stroke:0.25px #222;">12</div>
<div class="a" style="left:0px;top:504px;width:34px;height:1px;background:#dcdcdc"></div>
<div class="a" style="left:0.5px;top:484.35px;font-size:17px;line-height:17px;color:#222;width:34px;text-align:center;-webkit-text-stroke:0.25px #222;">13</div>
<div class="a" style="left:0px;top:527px;width:34px;height:1px;background:#dcdcdc"></div>
<div class="a" style="left:0.5px;top:507.35px;font-size:17px;line-height:17px;color:#222;width:34px;text-align:center;-webkit-text-stroke:0.25px #222;">14</div>
<div class="a" style="left:0px;top:551px;width:34px;height:1px;background:#dcdcdc"></div>
<div class="a" style="left:0.5px;top:531.35px;font-size:17px;line-height:17px;color:#222;width:34px;text-align:center;-webkit-text-stroke:0.25px #222;">15</div>
<div class="a" style="left:0px;top:575px;width:34px;height:1px;background:#dcdcdc"></div>
<div class="a" style="left:0.5px;top:555.35px;font-size:17px;line-height:17px;color:#222;width:34px;text-align:center;-webkit-text-stroke:0.25px #222;">16</div>
<div class="a" style="left:118px;top:216px;width:122px;height:26px;background:#1f5bc4;border:1px solid #1a3f8a"></div>
<div class="a" style="left:239px;top:216px;width:123px;height:26px;background:#1f5bc4;border:1px solid #1a3f8a"></div>
<div class="a" style="left:361px;top:216px;width:122px;height:26px;background:#1f5bc4;border:1px solid #1a3f8a"></div>
<div class="a" style="left:482px;top:216px;width:122px;height:26px;background:#1f5bc4;border:1px solid #1a3f8a"></div>
<div class="a" style="left:603px;top:216px;width:122px;height:26px;background:#1f5bc4;border:1px solid #1a3f8a"></div>
<div class="a" style="left:724px;top:216px;width:122px;height:26px;background:#b4c6e7;border:1px solid #737373"></div>
<div class="a" style="left:118px;top:241px;width:122px;height:25px;background:#1f5bc4;border:1px solid #1a3f8a"></div>
<div class="a" style="left:118px;top:265px;width:122px;height:25px;background:#1f5bc4;border:1px solid #1a3f8a"></div>
<div class="a" style="left:118px;top:289px;width:122px;height:25px;background:#1f5bc4;border:1px solid #1a3f8a"></div>
<div class="a" style="left:118px;top:313px;width:122px;height:25px;background:#1f5bc4;border:1px solid #1a3f8a"></div>
<div class="a" style="left:118px;top:337px;width:122px;height:25px;background:#1f5bc4;border:1px solid #1a3f8a"></div>
<div class="a" style="left:118px;top:361px;width:122px;height:25px;background:#1f5bc4;border:1px solid #1a3f8a"></div>
<div class="a" style="left:118px;top:385px;width:122px;height:25px;background:#1f5bc4;border:1px solid #1a3f8a"></div>
<div class="a" style="left:118px;top:409px;width:122px;height:25px;background:#1f5bc4;border:1px solid #1a3f8a"></div>
<div class="a" style="left:239px;top:241px;width:123px;height:25px;background:#fff;border:1px solid #737373"></div>
<div class="a" style="left:361px;top:241px;width:122px;height:25px;background:#fff;border:1px solid #737373"></div>
<div class="a" style="left:482px;top:241px;width:122px;height:25px;background:#fff;border:1px solid #737373"></div>
<div class="a" style="left:603px;top:241px;width:122px;height:25px;background:#fff;border:1px solid #737373"></div>
<div class="a" style="left:724px;top:241px;width:122px;height:25px;background:#b4c6e7;border:1px solid #737373"></div>
<div class="a" style="left:239px;top:265px;width:123px;height:25px;background:#fff;border:1px solid #737373"></div>
<div class="a" style="left:361px;top:265px;width:122px;height:25px;background:#fff;border:1px solid #737373"></div>
<div class="a" style="left:482px;top:265px;width:122px;height:25px;background:#fff;border:1px solid #737373"></div>
<div class="a" style="left:603px;top:265px;width:122px;height:25px;background:#fff;border:1px solid #737373"></div>
<div class="a" style="left:724px;top:265px;width:122px;height:25px;background:#b4c6e7;border:1px solid #737373"></div>
<div class="a" style="left:239px;top:289px;width:123px;height:25px;background:#fff;border:1px solid #737373"></div>
<div class="a" style="left:361px;top:289px;width:122px;height:25px;background:#fff;border:1px solid #737373"></div>
<div class="a" style="left:482px;top:289px;width:122px;height:25px;background:#fff;border:1px solid #737373"></div>
<div class="a" style="left:603px;top:289px;width:122px;height:25px;background:#fff;border:1px solid #737373"></div>
<div class="a" style="left:724px;top:289px;width:122px;height:25px;background:#b4c6e7;border:1px solid #737373"></div>
<div class="a" style="left:239px;top:313px;width:123px;height:25px;background:#fff;border:1px solid #737373"></div>
<div class="a" style="left:361px;top:313px;width:122px;height:25px;background:#fff;border:1px solid #737373"></div>
<div class="a" style="left:482px;top:313px;width:122px;height:25px;background:#fff;border:1px solid #737373"></div>
<div class="a" style="left:603px;top:313px;width:122px;height:25px;background:#fff;border:1px solid #737373"></div>
<div class="a" style="left:724px;top:313px;width:122px;height:25px;background:#b4c6e7;border:1px solid #737373"></div>
<div class="a" style="left:239px;top:337px;width:123px;height:25px;background:#fff;border:1px solid #737373"></div>
<div class="a" style="left:361px;top:337px;width:122px;height:25px;background:#fff;border:1px solid #737373"></div>
<div class="a" style="left:482px;top:337px;width:122px;height:25px;background:#fff;border:1px solid #737373"></div>
<div class="a" style="left:603px;top:337px;width:122px;height:25px;background:#fff;border:1px solid #737373"></div>
<div class="a" style="left:724px;top:337px;width:122px;height:25px;background:#b4c6e7;border:1px solid #737373"></div>
<div class="a" style="left:239px;top:361px;width:123px;height:25px;background:#fff;border:1px solid #737373"></div>
<div class="a" style="left:361px;top:361px;width:122px;height:25px;background:#fff;border:1px solid #737373"></div>
<div class="a" style="left:482px;top:361px;width:122px;height:25px;background:#fff;border:1px solid #737373"></div>
<div class="a" style="left:603px;top:361px;width:122px;height:25px;background:#fff;border:1px solid #737373"></div>
<div class="a" style="left:724px;top:361px;width:122px;height:25px;background:#b4c6e7;border:1px solid #737373"></div>
<div class="a" style="left:239px;top:385px;width:123px;height:25px;background:#fff;border:1px solid #737373"></div>
<div class="a" style="left:361px;top:385px;width:122px;height:25px;background:#fff;border:1px solid #737373"></div>
<div class="a" style="left:482px;top:385px;width:122px;height:25px;background:#fff;border:1px solid #737373"></div>
<div class="a" style="left:603px;top:385px;width:122px;height:25px;background:#fff;border:1px solid #737373"></div>
<div class="a" style="left:724px;top:385px;width:122px;height:25px;background:#b4c6e7;border:1px solid #737373"></div>
<div class="a" style="left:239px;top:409px;width:123px;height:25px;background:#fff;border:1px solid #737373"></div>
<div class="a" style="left:361px;top:409px;width:122px;height:25px;background:#fff;border:1px solid #737373"></div>
<div class="a" style="left:482px;top:409px;width:122px;height:25px;background:#fff;border:1px solid #737373"></div>
<div class="a" style="left:603px;top:409px;width:122px;height:25px;background:#fff;border:1px solid #737373"></div>
<div class="a" style="left:724px;top:409px;width:122px;height:25px;background:#b4c6e7;border:1px solid #737373"></div>
<div class="a" style="left:118px;top:433px;width:122px;height:24px;background:#b4c6e7;border:1px solid #737373"></div>
<div class="a" style="left:239px;top:433px;width:123px;height:24px;background:#b4c6e7;border:1px solid #737373"></div>
<div class="a" style="left:361px;top:433px;width:122px;height:24px;background:#b4c6e7;border:1px solid #737373"></div>
<div class="a" style="left:482px;top:433px;width:122px;height:24px;background:#b4c6e7;border:1px solid #737373"></div>
<div class="a" style="left:603px;top:433px;width:122px;height:24px;background:#b4c6e7;border:1px solid #737373"></div>
<div class="a" style="left:724px;top:433px;width:122px;height:24px;background:#b4c6e7;border:1px solid #737373"></div>
<div class="a" style="left:361px;top:241px;width:122px;height:25px;border:1px solid #3f7d5a"></div>
<div class="a" style="left:481px;top:264px;width:3px;height:3px;background:#217346"></div>
<div class="a" style="left:239.0px;top:222.17px;font-size:16.5px;line-height:16.5px;color:#fff;-webkit-text-stroke:0.9px #fff;letter-spacing:0.6px;width:123.6px;text-align:center;">Q1</div>
<div class="a" style="left:361.0px;top:222.17px;font-size:16.5px;line-height:16.5px;color:#fff;-webkit-text-stroke:0.9px #fff;letter-spacing:0.6px;width:122.6px;text-align:center;">Q2</div>
<div class="a" style="left:482.0px;top:222.17px;font-size:16.5px;line-height:16.5px;color:#fff;-webkit-text-stroke:0.9px #fff;letter-spacing:0.6px;width:122.6px;text-align:center;">Q3</div>
<div class="a" style="left:603.0px;top:222.17px;font-size:16.5px;line-height:16.5px;color:#fff;-webkit-text-stroke:0.9px #fff;letter-spacing:0.6px;width:122.6px;text-align:center;">Q4</div>
<div class="a" style="left:724.0px;top:221.75px;font-size:17px;line-height:17px;color:#000;font-weight:bold;-webkit-text-stroke:0.15px #000;letter-spacing:0.9px;width:122.9px;text-align:center;">Total</div>
<div class="a" style="left:121.5px;top:246.17px;font-size:16.5px;line-height:16.5px;color:#fff;-webkit-text-stroke:0.9px #fff;letter-spacing:0.6px;">John</div>
<div class="a" style="left:239.0px;top:246.17px;font-size:16.5px;line-height:16.5px;color:#000;-webkit-text-stroke:0.5px #000;letter-spacing:0.6px;width:119.0px;text-align:right;">$2,680</div>
<div class="a" style="left:361.0px;top:246.17px;font-size:16.5px;line-height:16.5px;color:#000;-webkit-text-stroke:0.5px #000;letter-spacing:0.6px;width:118.0px;text-align:right;">$7,512</div>
<div class="a" style="left:482.0px;top:246.17px;font-size:16.5px;line-height:16.5px;color:#000;-webkit-text-stroke:0.5px #000;letter-spacing:0.6px;width:118.0px;text-align:right;">3,332</div>
<div class="a" style="left:603.0px;top:246.17px;font-size:16.5px;line-height:16.5px;color:#000;-webkit-text-stroke:0.5px #000;letter-spacing:0.6px;width:118.0px;text-align:right;">6,213</div>
<div class="a" style="left:724.0px;top:245.75px;font-size:17px;line-height:17px;color:#000;font-weight:bold;-webkit-text-stroke:0.15px #000;letter-spacing:0.9px;width:119.1px;text-align:right;">19,737</div>
<div class="a" style="left:121.5px;top:270.18px;font-size:16.5px;line-height:16.5px;color:#fff;-webkit-text-stroke:0.9px #fff;letter-spacing:0.6px;">Lucy</div>
<div class="a" style="left:239.0px;top:270.18px;font-size:16.5px;line-height:16.5px;color:#000;-webkit-text-stroke:0.5px #000;letter-spacing:0.6px;width:119.0px;text-align:right;">$2,736</div>
<div class="a" style="left:361.0px;top:270.18px;font-size:16.5px;line-height:16.5px;color:#000;-webkit-text-stroke:0.5px #000;letter-spacing:0.6px;width:118.0px;text-align:right;">$2,645</div>
<div class="a" style="left:482.0px;top:270.18px;font-size:16.5px;line-height:16.5px;color:#000;-webkit-text-stroke:0.5px #000;letter-spacing:0.6px;width:118.0px;text-align:right;">3,632</div>
<div class="a" style="left:603.0px;top:270.18px;font-size:16.5px;line-height:16.5px;color:#000;-webkit-text-stroke:0.5px #000;letter-spacing:0.6px;width:118.0px;text-align:right;">60</div>
<div class="a" style="left:724.0px;top:269.75px;font-size:17px;line-height:17px;color:#000;font-weight:bold;-webkit-text-stroke:0.15px #000;letter-spacing:0.9px;width:119.1px;text-align:right;">9,073</div>
<div class="a" style="left:121.5px;top:294.18px;font-size:16.5px;line-height:16.5px;color:#fff;-webkit-text-stroke:0.9px #fff;letter-spacing:0.6px;">George</div>
<div class="a" style="left:239.0px;top:294.18px;font-size:16.5px;line-height:16.5px;color:#000;-webkit-text-stroke:0.5px #000;letter-spacing:0.6px;width:119.0px;text-align:right;">$7,234</div>
<div class="a" style="left:361.0px;top:294.18px;font-size:16.5px;line-height:16.5px;color:#000;-webkit-text-stroke:0.5px #000;letter-spacing:0.6px;width:118.0px;text-align:right;">$7,506</div>
<div class="a" style="left:482.0px;top:294.18px;font-size:16.5px;line-height:16.5px;color:#000;-webkit-text-stroke:0.5px #000;letter-spacing:0.6px;width:118.0px;text-align:right;">$9,867</div>
<div class="a" style="left:603.0px;top:294.18px;font-size:16.5px;line-height:16.5px;color:#000;-webkit-text-stroke:0.5px #000;letter-spacing:0.6px;width:118.0px;text-align:right;">3,842</div>
<div class="a" style="left:724.0px;top:293.75px;font-size:17px;line-height:17px;color:#000;font-weight:bold;-webkit-text-stroke:0.15px #000;letter-spacing:0.9px;width:119.1px;text-align:right;">28,449</div>
<div class="a" style="left:121.5px;top:318.18px;font-size:16.5px;line-height:16.5px;color:#fff;-webkit-text-stroke:0.9px #fff;letter-spacing:0.6px;">Grace</div>
<div class="a" style="left:239.0px;top:318.18px;font-size:16.5px;line-height:16.5px;color:#000;-webkit-text-stroke:0.5px #000;letter-spacing:0.6px;width:119.0px;text-align:right;">$8,710</div>
<div class="a" style="left:361.0px;top:318.18px;font-size:16.5px;line-height:16.5px;color:#000;-webkit-text-stroke:0.5px #000;letter-spacing:0.6px;width:118.0px;text-align:right;">$9,102</div>
<div class="a" style="left:482.0px;top:318.18px;font-size:16.5px;line-height:16.5px;color:#000;-webkit-text-stroke:0.5px #000;letter-spacing:0.6px;width:118.0px;text-align:right;">953</div>
<div class="a" style="left:603.0px;top:318.18px;font-size:16.5px;line-height:16.5px;color:#000;-webkit-text-stroke:0.5px #000;letter-spacing:0.6px;width:118.0px;text-align:right;">$8,688</div>
<div class="a" style="left:724.0px;top:317.75px;font-size:17px;line-height:17px;color:#000;font-weight:bold;-webkit-text-stroke:0.15px #000;letter-spacing:0.9px;width:119.1px;text-align:right;">27,453</div>
<div class="a" style="left:121.5px;top:342.18px;font-size:16.5px;line-height:16.5px;color:#fff;-webkit-text-stroke:0.9px #fff;letter-spacing:0.6px;">Maria</div>
<div class="a" style="left:239.0px;top:342.18px;font-size:16.5px;line-height:16.5px;color:#000;-webkit-text-stroke:0.5px #000;letter-spacing:0.6px;width:119.0px;text-align:right;">$5,209</div>
<div class="a" style="left:361.0px;top:342.18px;font-size:16.5px;line-height:16.5px;color:#000;-webkit-text-stroke:0.5px #000;letter-spacing:0.6px;width:118.0px;text-align:right;">$2,588</div>
<div class="a" style="left:482.0px;top:342.18px;font-size:16.5px;line-height:16.5px;color:#000;-webkit-text-stroke:0.5px #000;letter-spacing:0.6px;width:118.0px;text-align:right;">1,802</div>
<div class="a" style="left:603.0px;top:342.18px;font-size:16.5px;line-height:16.5px;color:#000;-webkit-text-stroke:0.5px #000;letter-spacing:0.6px;width:118.0px;text-align:right;">6,942</div>
<div class="a" style="left:724.0px;top:341.75px;font-size:17px;line-height:17px;color:#000;font-weight:bold;-webkit-text-stroke:0.15px #000;letter-spacing:0.9px;width:119.1px;text-align:right;">16,541</div>
<div class="a" style="left:121.5px;top:366.18px;font-size:16.5px;line-height:16.5px;color:#fff;-webkit-text-stroke:0.9px #fff;letter-spacing:0.6px;">Herman</div>
<div class="a" style="left:239.0px;top:366.18px;font-size:16.5px;line-height:16.5px;color:#000;-webkit-text-stroke:0.5px #000;letter-spacing:0.6px;width:119.0px;text-align:right;">$4,164</div>
<div class="a" style="left:361.0px;top:366.18px;font-size:16.5px;line-height:16.5px;color:#000;-webkit-text-stroke:0.5px #000;letter-spacing:0.6px;width:118.0px;text-align:right;">$61</div>
<div class="a" style="left:482.0px;top:366.18px;font-size:16.5px;line-height:16.5px;color:#000;-webkit-text-stroke:0.5px #000;letter-spacing:0.6px;width:118.0px;text-align:right;">3,807</div>


<div class="a" style="left:121.5px;top:390.18px;font-size:16.5px;line-height:16.5px;color:#fff;-webkit-text-stroke:0.9px #fff;letter-spacing:0.6px;">Bob</div>
<div class="a" style="left:239.0px;top:390.18px;font-size:16.5px;line-height:16.5px;color:#000;-webkit-text-stroke:0.5px #000;letter-spacing:0.6px;width:119.0px;text-align:right;">$8,742</div>
<div class="a" style="left:361.0px;top:390.18px;font-size:16.5px;line-height:16.5px;color:#000;-webkit-text-stroke:0.5px #000;letter-spacing:0.6px;width:118.0px;text-align:right;">$4,440</div>
<div class="a" style="left:482.0px;top:390.18px;font-size:16.5px;line-height:16.5px;color:#000;-webkit-text-stroke:0.5px #000;letter-spacing:0.6px;width:118.0px;text-align:right;">6,841</div>


<div class="a" style="left:121.5px;top:414.18px;font-size:16.5px;line-height:16.5px;color:#fff;-webkit-text-stroke:0.9px #fff;letter-spacing:0.6px;">Jane</div>
<div class="a" style="left:239.0px;top:414.18px;font-size:16.5px;line-height:16.5px;color:#000;-webkit-text-stroke:0.5px #000;letter-spacing:0.6px;width:119.0px;text-align:right;">$1,585</div>
<div class="a" style="left:361.0px;top:414.18px;font-size:16.5px;line-height:16.5px;color:#000;-webkit-text-stroke:0.5px #000;letter-spacing:0.6px;width:118.0px;text-align:right;">$3,969</div>
<div class="a" style="left:482.0px;top:414.18px;font-size:16.5px;line-height:16.5px;color:#000;-webkit-text-stroke:0.5px #000;letter-spacing:0.6px;width:118.0px;text-align:right;">3,217</div>


<div class="a" style="left:121.5px;top:436.75px;font-size:17px;line-height:17px;color:#000;font-weight:bold;-webkit-text-stroke:0.15px #000;letter-spacing:0.9px;">Total</div>
<div class="a" style="left:239.0px;top:436.75px;font-size:17px;line-height:17px;color:#000;font-weight:bold;-webkit-text-stroke:0.15px #000;letter-spacing:0.9px;width:120.1px;text-align:right;">41,060</div>
<div class="a" style="left:361.0px;top:436.75px;font-size:17px;line-height:17px;color:#000;font-weight:bold;-webkit-text-stroke:0.15px #000;letter-spacing:0.9px;width:119.1px;text-align:right;">37,823</div>
<div class="a" style="left:482.0px;top:436.75px;font-size:17px;line-height:17px;color:#000;font-weight:bold;-webkit-text-stroke:0.15px #000;letter-spacing:0.9px;width:119.1px;text-align:right;">33,451</div>
<div class="a" style="left:603.0px;top:436.75px;font-size:17px;line-height:17px;color:#000;font-weight:bold;-webkit-text-stroke:0.15px #000;letter-spacing:0.9px;width:119.1px;text-align:right;">31,224</div>

<div class="a" style="left:672px;top:361px;width:360px;height:76px;background:#1f57c3"></div>
<div class="a" style="left:800.3px;top:371.7px;width:85.7px;height:54px;background:#424950;border-radius:4px"></div>
<div class="a" style="left:815.8px;top:381.55px;font-size:37px;line-height:37px;color:#fff;font-weight:bold;transform:scaleX(0.841);transform-origin:0 0;">Esc</div>
<svg class="a" style="left:610px;top:460px;" width="145" height="62" viewBox="0 0 145 62"><polygon points="1,31 50.2,1.3 50.2,17.3 142.6,17.3 142.6,45.7 50.2,45.7 50.2,61.9" fill="#1f57c3"/></svg>
<svg class="a" style="left:584.5px;top:480px;" width="16" height="16" viewBox="0 0 16 16"><path d="M5 1 H10.5 V5 H14.8 V10.5 H10.5 V14.8 H5 V10.5 H1 V5 H5 Z" fill="#fff" stroke="#111" stroke-width="1.7"/></svg>
</body></html>
